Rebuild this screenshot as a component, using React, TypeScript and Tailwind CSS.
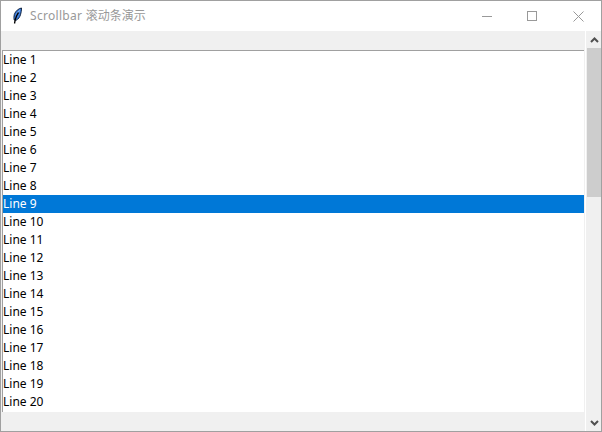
const lines = Array.from({ length: 20 }, (_, i) => i + 1);

const Feather = () => (
  <svg width="16" height="18" viewBox="0 0 16 18" className="shrink-0">
    <path d="M12.500 1C9.500 1.500 6.500 4 5.300 7.500 4.800 9.500 4.800 11.500 5.200 13l2 .2c2-1 3.500-3 4.300-5.500.7-2.200 1-4.500 1-6.700z" fill="#3f7fe0" stroke="#0f2340" strokeWidth="1" />
    <path d="M10.800 3.500C9.300 4.500 8 6.500 7.300 9" fill="none" stroke="#a9cdf6" strokeWidth="1" />
    <path d="M9.500 5.500C8 7.500 7 10 6.300 12.500L5.500 16.500" fill="none" stroke="#000" strokeWidth="1.300" />
  </svg>
);

export default function App() {
  return (
    <div className="w-[602px] h-[432px] flex flex-col border border-[#a0a0a0] bg-[#f0f0f0] font-['Noto_Sans','Noto_Sans_CJK_SC',sans-serif] overflow-hidden">
      <div className="h-[30px] shrink-0 bg-white flex items-center pl-[8px]">
        <Feather />
        <span className="ml-[5px] text-[12px] text-[#999999]">
          <span className="tracking-[0.3px]">Scrollbar </span>滚动条演示
        </span>
        <div className="ml-auto flex items-center h-full">
          <div className="w-[45px] flex justify-center">
            <div className="w-[10px] h-px bg-[#999999]" />
          </div>
          <div className="w-[46px] flex justify-center">
            <div className="w-[10px] h-[10px] border border-[#999999]" />
          </div>
          <div className="w-[46px] flex justify-center">
            <svg width="11" height="11" viewBox="0 0 11 11">
              <path d="M.5.500l10 10M10.500.500l-10 10" stroke="#999999" fill="none" />
            </svg>
          </div>
        </div>
      </div>
      <div className="flex-1 flex min-h-0">
        <div className="flex-1 flex flex-col min-w-0 pl-px pt-[19px]">
          <div className="flex-1 min-h-0 bg-white border-l border-t border-[#a0a0a0] mb-[19px] overflow-hidden">
            {lines.map((n) => (
              <div
                key={n}
                className={`h-[18px] text-[12px] leading-[18px] ${n === 9 ? "bg-[#0078d7] text-white" : "text-black"}`}
              >
                Line {n}
              </div>
            ))}
          </div>
        </div>
        <div className="w-[16px] shrink-0 ml-px flex border-l border-white">
          <div className="w-[14px] ml-px flex flex-col items-center">
            <div className="h-[17px] shrink-0 flex items-center justify-center">
              <svg width="9" height="6" viewBox="0 0 9 6">
                <path d="M1 5l3.500-3.500L8 5" fill="none" stroke="#505050" strokeWidth="2" />
              </svg>
            </div>
            <div className="w-full flex-1 min-h-0 flex flex-col">
              <div className="h-[149px] shrink-0 bg-[#cdcdcd]" />
            </div>
            <div className="h-[17px] shrink-0 flex items-center justify-center">
              <svg width="9" height="6" viewBox="0 0 9 6">
                <path d="M1 1l3.500 3.500L8 1" fill="none" stroke="#505050" strokeWidth="2" />
              </svg>
            </div>
          </div>
        </div>
      </div>
    </div>
  );
}
